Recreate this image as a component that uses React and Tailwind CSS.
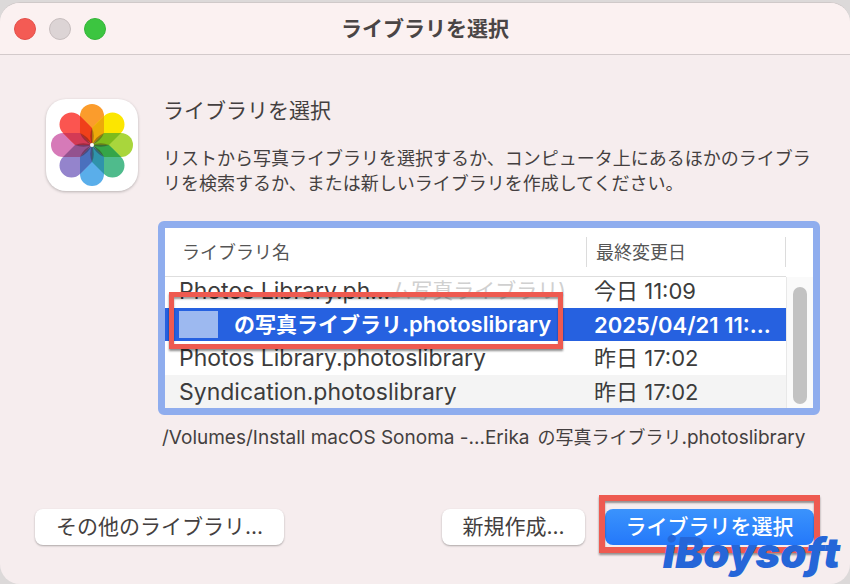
const libraries = [
  { id: 1, name: 'Photos Library.ph...', ghost: 'ム写真ライブラリ)', date: '今日 11:09', row: 'h-[31px] bg-white align-top leading-[28px]' },
  { id: 2, name: 'の写真ライブラリ', ext: '.photoslibrary', date: '2025/04/21 11:...', row: 'h-[33px] bg-[#2661e0] text-white font-semibold leading-[30px]', selected: true },
  { id: 3, name: 'Photos Library.photoslibrary', date: '昨日 17:02', row: 'h-[34px] bg-white leading-[30px]' },
  { id: 4, name: 'Syndication.photoslibrary', date: '昨日 17:02', row: 'h-[33px] bg-[#f4f4f4] leading-[30px]' },
];

// overlap is the shade where a petal crosses the next one clockwise
const petals = [
  { angle: 0, color: '#fb9c2c', overlap: '#eda90a' },
  { angle: 45, color: '#fce600', overlap: '#7dbb1c' },
  { angle: 90, color: '#a9d63c', overlap: '#35a548' },
  { angle: 135, color: '#4fbb8c', overlap: '#2f93ab' },
  { angle: 180, color: '#5aaeea', overlap: '#4a70bd' },
  { angle: 225, color: '#9484cc', overlap: '#93528f' },
  { angle: 270, color: '#d67ab8', overlap: '#d33a55' },
  { angle: 315, color: '#fb5550', overlap: '#f0401a' },
];

function PhotosIcon() {
  return (
    <div className="size-[92px] shrink-0 rounded-[20px] bg-white shadow-[0_1px_3px_rgba(0,0,0,0.25)]">
      <svg viewBox="-46 -46 92 92" className="size-full" aria-hidden="true">
        {petals.map(p => (
          <rect key={p.angle} x="-12" y="-41" width="24" height="36" rx="12" fill={p.color} transform={`rotate(${p.angle})`} />
        ))}
        {petals.map(p => (
          <path key={p.angle} d="M0 0 0-17 12-29 12-12Z" fill={p.overlap} transform={`rotate(${p.angle})`} />
        ))}
        {petals.map(p => (
          <path key={p.angle} d="M0 0Q-3.5-9 0-17Q3.5-9 0 0Z" fill="#3a1018" opacity="0.35" transform={`rotate(${p.angle})`} />
        ))}
        <circle r="2" fill="#fff" />
      </svg>
    </div>
  );
}

function TitleBar() {
  return (
    <header className="relative flex h-[52px] items-center border-b border-[#d3cacb] bg-[#fbf1f1] px-3.5">
      <div className="flex gap-[13px]">
        <button aria-label="閉じる" className="size-[22px] rounded-full border border-[#e2504a] bg-[#f45b54]" />
        <button aria-label="しまう" className="size-[22px] rounded-full border border-[#c6bdbe] bg-[#dcd4d5]" />
        <button aria-label="拡大" className="size-[22px] rounded-full border border-[#35b53a] bg-[#3cc540]" />
      </div>
      <h1 className="absolute inset-x-0 text-center text-[21px] font-semibold text-[#4a4545]">ライブラリを選択</h1>
    </header>
  );
}

function LibraryTable() {
  return (
    <div className="flex rounded-[6px] border-[7px] border-[#8fadee] bg-white">
      <table className="min-w-0 flex-1 table-fixed border-separate border-spacing-0 text-left">
        <thead>
          <tr className="h-[49px] text-[18px] leading-[28px] text-[#555]">
            <th className="border-b border-[#dedede] p-0 font-normal">
              <div className="border-r border-[#dcdcdc] pt-0.5 pl-[17px]">ライブラリ名</div>
            </th>
            <th className="w-[199px] border-b border-[#dedede] p-0 font-normal">
              <div className="border-r border-[#dcdcdc] pt-0.5 pl-[9px]">最終変更日</div>
            </th>
          </tr>
        </thead>
        <tbody className="text-[22px] text-[#3c3c3c]">
          {libraries.map(lib => (
            <tr key={lib.id} className={lib.row}>
              <td className="relative p-0 pl-3.5 whitespace-nowrap">
                {lib.selected ? (
                  <div className="flex items-center">
                    <span className="mr-4 h-[27px] w-[39px] bg-[#9db9f0]" />
                    <span><span className="text-[21px]">{lib.name}</span>{lib.ext}</span>
                  </div>
                ) : (
                  <div className="flex items-center text-[23px]">
                    {lib.name}
                    {lib.ghost && <span className="text-[21px] text-[#d0d0d0]">{lib.ghost}</span>}
                  </div>
                )}
                {lib.selected && (
                  <div className="absolute -top-4 right-6 -bottom-2 left-1 z-10 border-5 border-[#ee5a50] shadow-[0_2px_2px_rgba(0,0,0,0.45),inset_0_2px_2px_rgba(0,0,0,0.4)]" />
                )}
              </td>
              <td className="p-0 pl-[7px] whitespace-nowrap">{lib.date}</td>
            </tr>
          ))}
        </tbody>
      </table>
      <div className="mt-[49px] w-[27px] border-l border-[#e8e8e8] bg-[#fafafa] px-1.5 pt-2.5 pb-1">
        <div className="h-full w-3.5 rounded-full bg-[#c2c2c2]" />
      </div>
    </div>
  );
}

export default function App() {
  return (
    <div className="flex min-h-screen flex-col bg-[#dcd9d9] pt-0.5 font-['Inter','Noto_Sans_CJK_JP',sans-serif]">
      <div className="flex flex-1 flex-col overflow-hidden rounded-[20px] border-t border-[#cfc9c9] bg-[#f6edee] text-[#443f40]">
        <TitleBar />
        <main className="flex flex-1 flex-col pt-11">
          <div className="flex gap-[25px] pr-[30px] pl-[46px]">
            <PhotosIcon />
            <div className="min-w-0 flex-1">
              <h2 className="text-[21px] leading-[24px]">ライブラリを選択</h2>
              <p className="mt-[23px] text-[18px] leading-[25px] whitespace-nowrap">
                リストから写真ライブラリを選択するか、コンピュータ上にあるほかのライブラ
                <br />
                リを検索するか、または新しいライブラリを作成してください。
              </p>
            </div>
          </div>
          <div className="mt-[25px] pr-[30px] pl-[158px]">
            <LibraryTable />
            <p className="mt-2.5 pl-1 text-[19px] leading-[26px] whitespace-nowrap">
              /Volumes/Install macOS Sonoma -...Erika
              <span className="ml-2 text-[18px]">の写真ライブラリ</span>
              .photoslibrary
            </p>
          </div>
          <footer className="mt-auto flex items-center pr-[36px] pb-[39px] pl-[35px] text-[21px] leading-[36px]">
            <button className="w-[249px] rounded-[8px] bg-white shadow-[0_1px_2px_rgba(0,0,0,0.3)]">その他のライブラリ...</button>
            <button className="mr-5 ml-auto w-[143px] rounded-[8px] bg-white shadow-[0_1px_2px_rgba(0,0,0,0.3)]">新規作成...</button>
            <div className="relative">
              <button className="w-[209px] rounded-[8px] bg-linear-to-b from-[#3b93fc] to-[#2478fa] font-medium text-white">ライブラリを選択</button>
              <div className="absolute -inset-x-1.5 -top-3.5 -bottom-2 border-[6px] border-[#ee5a50] shadow-[0_2px_2px_rgba(0,0,0,0.4),inset_0_2px_2px_rgba(0,0,0,0.4)]" />
              <span className="absolute top-5 -right-[26px] text-[42px] leading-[48px] font-black text-[#2566d8] italic">iBoysoft</span>
            </div>
          </footer>
        </main>
      </div>
    </div>
  );
}
